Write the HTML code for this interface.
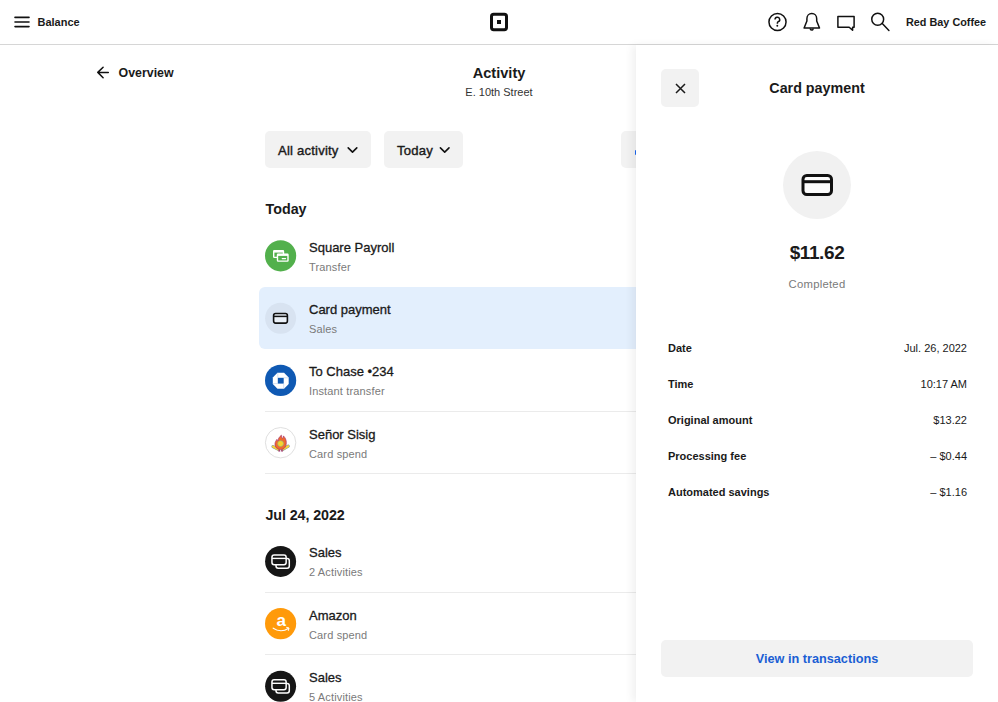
<!DOCTYPE html>
<html><head><meta charset="utf-8">
<style>
*{margin:0;padding:0;box-sizing:border-box}
html,body{width:998px;height:702px;overflow:hidden;background:#fff;font-family:"Liberation Sans",sans-serif;color:#1a1a1a;position:relative}
.abs{position:absolute}
.hdr{position:absolute;left:0;top:0;width:998px;height:45px;border-bottom:1px solid #d6d6d6;background:#fff}
.t{position:absolute;white-space:nowrap;line-height:1}
.b{font-weight:bold}
.med{font-weight:normal;-webkit-text-stroke:0.4px currentColor}
.btn{position:absolute;background:#f2f2f2;border-radius:5px}
.row-title{position:absolute;left:309px;font-size:13px;white-space:nowrap;line-height:1;color:#1a1a1a;-webkit-text-stroke:0.3px #1a1a1a}
.row-sub{position:absolute;left:309px;font-size:11px;letter-spacing:0.15px;white-space:nowrap;line-height:1;color:#7a7a7a}
.ico{position:absolute;left:265px;width:31px;height:31px;border-radius:50%}
.sep{position:absolute;left:265px;width:371px;height:1px;background:#ebebeb}
.panel{position:absolute;left:636px;top:45px;width:362px;height:657px;background:#fff;box-shadow:-4px 0 8px rgba(0,0,0,0.06)}
.lbl{position:absolute;left:32px;font-size:11px;font-weight:bold;white-space:nowrap;line-height:1}
.val{position:absolute;right:31px;font-size:11px;white-space:nowrap;line-height:1;color:#1a1a1a}
</style></head>
<body>
<!-- header -->
<div class="hdr">
  <svg class="abs" style="left:0;top:0" width="998" height="44" viewBox="0 0 998 44">
    <g fill="none" stroke="#111" stroke-width="1.6" stroke-linecap="round">
      <path d="M15 17.4h14M15 22h14M15 26.6h14"/>
    </g>
    <rect x="491.5" y="14.3" width="15" height="15.4" rx="2.2" fill="none" stroke="#111" stroke-width="3"/>
    <rect x="497" y="20" width="4" height="4" fill="#111"/>
    <g fill="none" stroke="#111" stroke-width="1.5" stroke-linejoin="round">
      <circle cx="777.5" cy="22" r="8.55"/>
      <path d="M775 19.6a2.35 2.35 0 1 1 3.4 2.1c-.6.3-1 .8-1 1.4v.6"/>
      <path d="M811.7 13.5c-2.7 0-4.8 2.2-4.8 5.2v2.3l-2.8 7h15.4l-2.8-7v-2.3c0-3-2.1-5.2-4.8-5.2z"/>
      <path d="M810.2 28.6a1.5 1.5 0 0 0 3 0"/>
      <path d="M837.9 16.6h16.2v10.6h-1.5v3l-3.4-3h-11.3z"/>
      <circle cx="877.7" cy="19.25" r="5.95"/>
      <path d="M882.3 23.6l6.6 6.8" stroke-linecap="round"/>
    </g>
    <circle cx="777.3" cy="25.8" r="0.95" fill="#111"/>
  </svg>
  <div class="t b" style="left:37.5px;top:17px;font-size:11px">Balance</div>
  <div class="t b" style="left:906px;top:17px;font-size:10.85px">Red Bay Coffee</div>
</div>

<!-- main -->
<svg class="abs" style="left:90px;top:60px" width="25" height="25" viewBox="90 60 25 25">
  <path d="M108.3 72.4H97.8M103.1 67.2L97.8 72.4l5.3 5.3" fill="none" stroke="#111" stroke-width="1.5" stroke-linecap="round" stroke-linejoin="round"/>
</svg>
<div class="t b" style="left:118.5px;top:66.8px;font-size:12.4px">Overview</div>
<div class="t b" style="left:0;width:998px;text-align:center;top:65.6px;font-size:14.6px">Activity</div>
<div class="t" style="left:0;width:998px;text-align:center;top:86.8px;font-size:11px;color:#333">E. 10th Street</div>

<div class="btn" style="left:265px;top:131px;width:106px;height:37px"></div>
<div class="t med" style="left:278px;top:143.8px;font-size:13.1px;letter-spacing:0.2px">All activity</div>
<svg class="abs" style="left:340px;top:140px" width="25" height="20" viewBox="340 140 25 20"><path d="M348.2 147.9l4.3 4.2 4.3-4.2" fill="none" stroke="#111" stroke-width="1.6" stroke-linecap="round" stroke-linejoin="round"/></svg>
<div class="btn" style="left:384px;top:131px;width:79px;height:37px"></div>
<div class="t med" style="left:397px;top:143.8px;font-size:13.1px;letter-spacing:0.2px">Today</div>
<svg class="abs" style="left:432px;top:140px" width="25" height="20" viewBox="432 140 25 20"><path d="M440.4 147.9l4.3 4.2 4.3-4.2" fill="none" stroke="#111" stroke-width="1.6" stroke-linecap="round" stroke-linejoin="round"/></svg>
<div class="btn" style="left:621px;top:131px;width:60px;height:37px"></div>
<div class="abs" style="left:634.5px;top:149.5px;width:2px;height:5.2px;border-radius:1px;background:#1a66f0"></div>

<div class="t b" style="left:265.5px;top:202.4px;font-size:14.3px">Today</div>

<!-- rows -->
<div class="abs" style="left:259px;top:287px;width:377px;height:62px;background:#e3effd;border-radius:6px 0 0 6px"></div>
<svg class="abs" style="left:255px;top:230px" width="50" height="472" viewBox="255 230 50 472">
  <!-- payroll -->
  <circle cx="280.6" cy="255.8" r="15.6" fill="#52b04c"/>
  <g fill="none" stroke="#fff" stroke-width="1.4">
    <rect x="273.7" y="250.8" width="9.8" height="6.6" rx="0.6"/>
    <path d="M273.7 251.6h9.8" stroke-width="2"/>
  </g>
  <rect x="277.5" y="254.1" width="10.5" height="7" rx="0.6" fill="#52b04c" stroke="#fff" stroke-width="1.4"/>
  <path d="M277.5 254.9h10.5" stroke="#fff" stroke-width="2"/>
  <path d="M282.2 258.6h3.4" stroke="#fff" stroke-width="1.1" stroke-linecap="round"/>
  <!-- card payment -->
  <circle cx="280.6" cy="318.2" r="15.5" fill="#d8e3f1"/>
  <rect x="273.6" y="313.5" width="13.8" height="9.6" rx="2" fill="#eaf0f7" stroke="#111" stroke-width="1.6"/>
  <path d="M273.6 316.4h13.8" stroke="#111" stroke-width="1.5"/>
  <!-- chase -->
  <circle cx="280.6" cy="380.4" r="15.6" fill="#0f59b3"/>
  <path d="M277.45 372.8h6.6l4.65 4.65v6.6l-4.65 4.65h-6.6l-4.65-4.65v-6.6z" fill="#fff"/>
  <rect x="277.8" y="377.8" width="5.9" height="5.8" fill="#0f59b3"/>
  <path d="M277.8 377.8v-5M283.7 377.8h5M283.7 383.6v5M277.8 383.6h-5" stroke="#a9c2e4" stroke-width="0.5"/>
  <!-- sisig -->
  <circle cx="280.6" cy="442.7" r="15.2" fill="#fff" stroke="#e0e0e0" stroke-width="1"/>
  <path d="M273 446.6l5.5 2.8M288.2 446.2l-5.5 3.2" stroke="#7c9aa6" stroke-width="3.2" stroke-linecap="round"/>
  <path d="M273 446.6l5.5 2.8M288.2 446.2l-5.5 3.2" stroke="#f3d23a" stroke-width="2.2" stroke-linecap="round"/>
  <path d="M280.6 449.5c-3.8 0-5.6-2.6-5.6-5.3 0-2.3 1.1-3.6 1.9-4.8 0.3 1 0.7 1.4 1.1 1.6 0.2-2.2 1.2-4.2 3.4-5.8 -0.1 1.6 0.5 2.6 1.1 3.3 0.6-0.8 0.9-1.6 0.9-2.6 1.9 1.8 2.9 4.2 2.9 6.6 0 4-1.9 7-5.7 7z" fill="#ee6a2c" stroke="#a8306a" stroke-width="0.7"/>
  <circle cx="280.6" cy="443.6" r="2.9" fill="#f5d52c" stroke="#86b58a" stroke-width="0.6"/>
  <path d="M278.6 449.2l2 1.7 2-1.7v2.8l-2-1-2 1z" fill="#a3306e"/>
  <!-- sales 1 -->
  <circle cx="280.6" cy="561.4" r="15.5" fill="#161616"/>
  <rect x="276" y="558.55" width="13.3" height="9.6" rx="2.2" fill="none" stroke="#fff" stroke-width="1.5"/>
  <rect x="271.95" y="554.95" width="14.2" height="9.8" rx="2.2" fill="#161616" stroke="#fff" stroke-width="1.5"/>
  <path d="M272 558.4h14" stroke="#fff" stroke-width="1.4"/>
  <!-- amazon -->
  <circle cx="280.6" cy="623.6" r="15.6" fill="#ff9a0a"/>
  <text x="281.2" y="626.1" text-anchor="middle" font-family="Liberation Sans" font-weight="bold" font-size="17" fill="#fff">a</text>
  <path d="M273.2 628.2c4.5 3 10.5 3.3 15 0.3" fill="none" stroke="#fff" stroke-width="1.2" stroke-linecap="round"/>
  <path d="M286.6 627.4l2.4 0.6-0.6 2.4" fill="none" stroke="#fff" stroke-width="1" stroke-linecap="round" stroke-linejoin="round"/>
  <!-- sales 2 -->
  <circle cx="280.6" cy="686.3" r="15.5" fill="#161616"/>
  <rect x="276" y="683.45" width="13.3" height="9.6" rx="2.2" fill="none" stroke="#fff" stroke-width="1.5"/>
  <rect x="271.95" y="679.85" width="14.2" height="9.8" rx="2.2" fill="#161616" stroke="#fff" stroke-width="1.5"/>
  <path d="M272 683.3h14" stroke="#fff" stroke-width="1.4"/>
</svg>


<div class="row-title" style="top:240.6px">Square Payroll</div>
<div class="row-sub" style="top:261.6px">Transfer</div>

<div class="row-title" style="top:302.6px">Card payment</div>
<div class="row-sub" style="top:323.6px">Sales</div>

<div class="row-title" style="top:364.6px">To Chase •234</div>
<div class="row-sub" style="top:385.6px">Instant transfer</div>
<div class="sep" style="top:411px"></div>

<div class="row-title" style="top:427.6px">Señor Sisig</div>
<div class="row-sub" style="top:448.6px">Card spend</div>
<div class="sep" style="top:473px"></div>

<div class="t b" style="left:265.5px;top:507.6px;font-size:14.3px;letter-spacing:-0.1px">Jul 24, 2022</div>

<div class="row-title" style="top:545.6px">Sales</div>
<div class="row-sub" style="top:566.6px">2 Activities</div>
<div class="sep" style="top:592px"></div>

<div class="row-title" style="top:608.6px">Amazon</div>
<div class="row-sub" style="top:629.6px">Card spend</div>
<div class="sep" style="top:654px"></div>

<div class="row-title" style="top:670.6px">Sales</div>
<div class="row-sub" style="top:691.6px">5 Activities</div>

<!-- panel -->
<div class="panel">
  <div class="btn" style="left:25.2px;top:24.3px;width:37.4px;height:37.4px"></div>
  <svg class="abs" style="left:38.5px;top:37.8px" width="11" height="11" viewBox="0 0 11 11">
    <path d="M1 1l9 9M10 1l-9 9" stroke="#1a1a1a" stroke-width="1.5"/>
  </svg>
  <div class="t b" style="left:0;width:362px;text-align:center;top:36px;font-size:14.3px">Card payment</div>
  <div class="abs" style="left:147px;top:105.8px;width:68px;height:68px;border-radius:50%;background:#f1f1f1"></div>
  <svg class="abs" style="left:160px;top:124px" width="42" height="32" viewBox="796 169 42 32">
    <rect x="803" y="175.5" width="28.5" height="19" rx="3.8" fill="#fcfcfc" stroke="#111" stroke-width="3"/>
    <path d="M803 181.7h28.5" stroke="#111" stroke-width="3"/>
  </svg>
  <div class="t b" style="left:0;width:362px;text-align:center;top:197.6px;font-size:19px;letter-spacing:-0.4px">$11.62</div>
  <div class="t" style="left:0;width:362px;text-align:center;top:234.2px;font-size:11.3px;letter-spacing:0.25px;color:#7a7a7a">Completed</div>

  <div class="lbl" style="top:298px">Date</div><div class="val" style="top:298px">Jul. 26, 2022</div>
  <div class="lbl" style="top:334px">Time</div><div class="val" style="top:334px">10:17 AM</div>
  <div class="lbl" style="top:370px">Original amount</div><div class="val" style="top:370px">$13.22</div>
  <div class="lbl" style="top:406px">Processing fee</div><div class="val" style="top:406px">– $0.44</div>
  <div class="lbl" style="top:442px">Automated savings</div><div class="val" style="top:442px">– $1.16</div>

  <div class="btn" style="left:25px;top:594.6px;width:312px;height:37.2px"></div>
  <div class="t b" style="left:25px;width:312px;text-align:center;top:607.8px;font-size:12.7px;color:#1a5ed4">View in transactions</div>
</div>
</body></html>
